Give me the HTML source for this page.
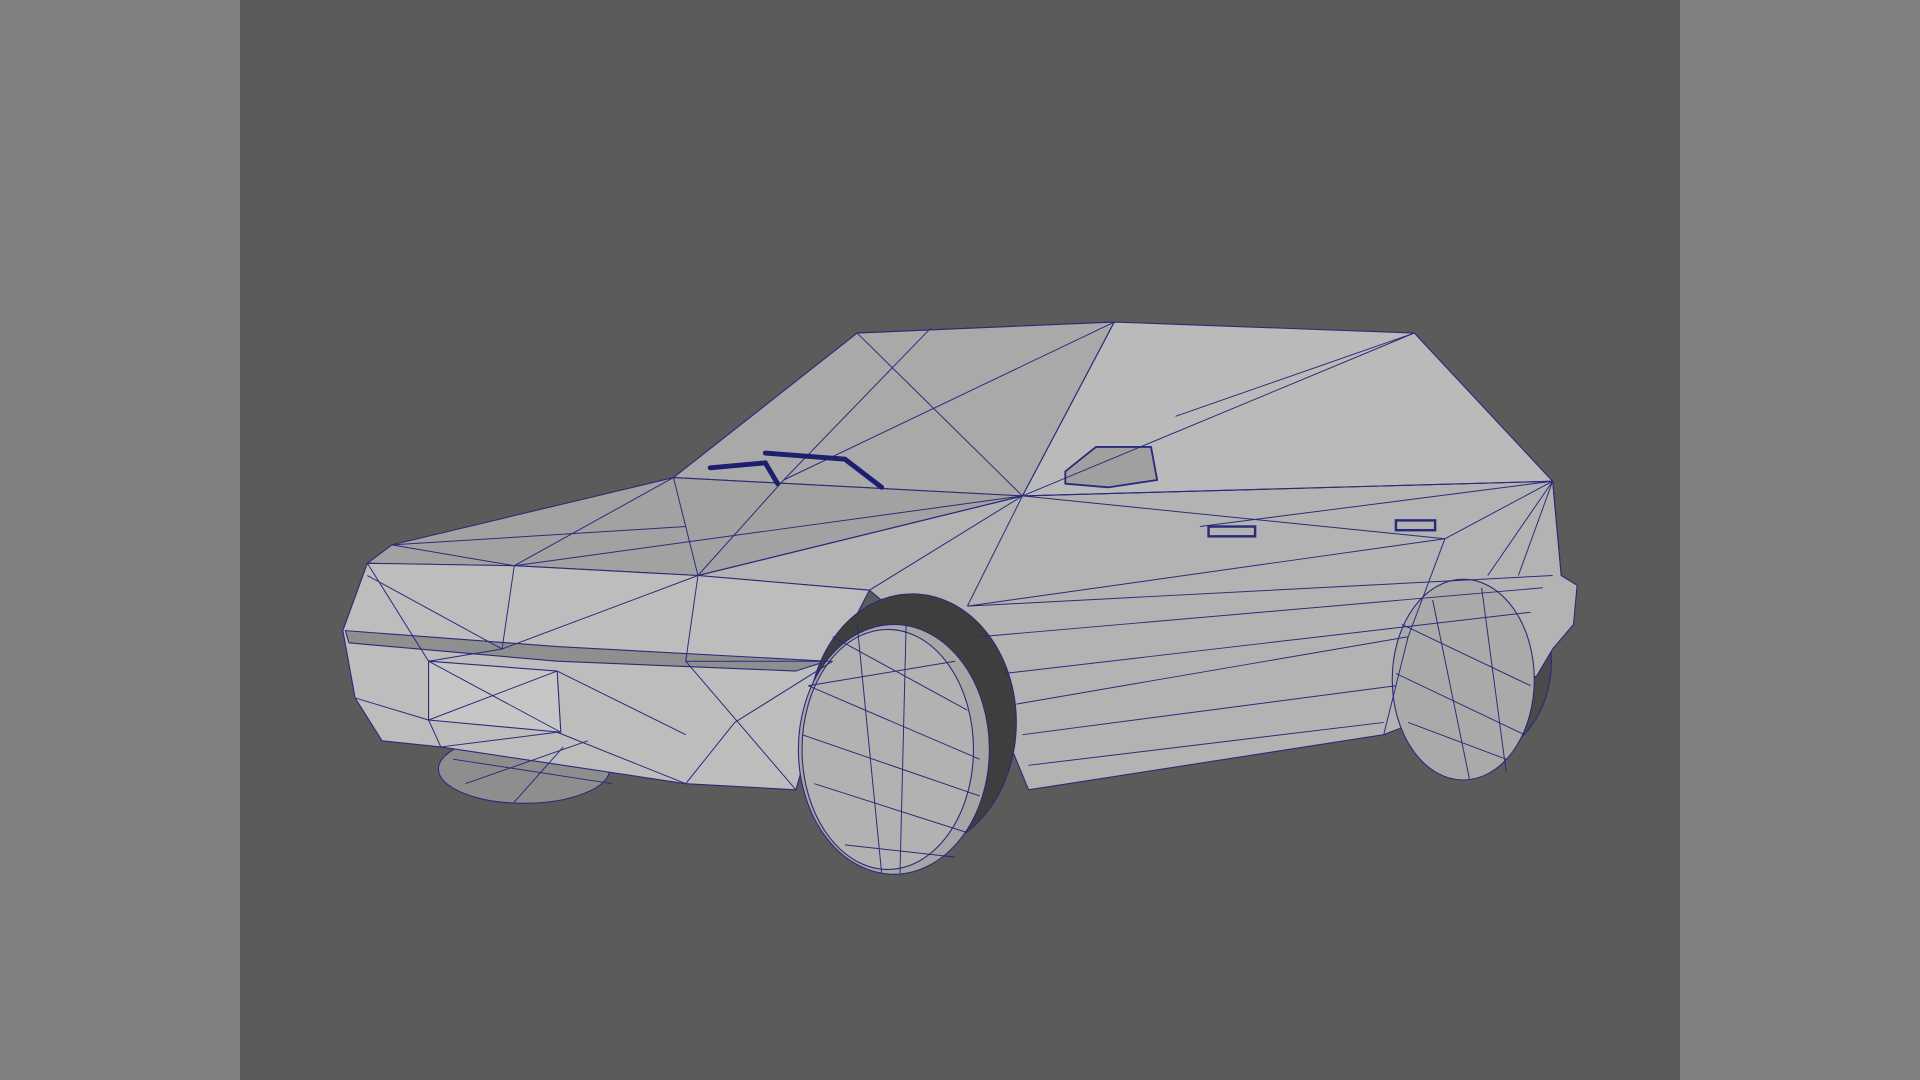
<!DOCTYPE html>
<html><head><meta charset="utf-8"><style>
html,body{margin:0;padding:0;width:1920px;height:1080px;overflow:hidden;background:#808080}
svg{display:block}
</style></head><body>
<svg width="1920" height="1080" viewBox="0 0 1568 882" preserveAspectRatio="none" xmlns="http://www.w3.org/2000/svg">
<rect x="0" y="0" width="1568" height="882" fill="#808080"/>
<rect x="196" y="0" width="1176" height="882" fill="#5b5b5b"/>
<g stroke="#2a2a7a" stroke-width="0.9" stroke-linejoin="round">
<!-- hidden front-left wheel -->
<ellipse cx="428" cy="628" rx="70" ry="28" fill="#8e8e8e"/>
<!-- rear wheel arch shadow -->
<ellipse cx="1205" cy="540" rx="62" ry="78" fill="#4a4a4a"/>
<!-- side -->
<polygon points="835,405 1268,393 1275,470 1288,478 1285,510 1268,530 1255,552 1130,600 840,645 805,560 710,482 570,470" fill="#b3b3b3"/>
<!-- roof -->
<polygon points="700,272 910,263 1155,272 1268,393 835,405" fill="#bababa"/>
<!-- windshield -->
<polygon points="550,390 700,272 910,263 835,405" fill="#a9a9a9"/>
<!-- hood -->
<polygon points="300,460 320,445 550,390 835,405 570,470 420,462" fill="#a2a2a2"/>
<!-- front face -->
<polygon points="300,460 420,462 570,470 710,482 680,540 650,645 560,640 360,610 312,605 290,570 280,515" fill="#bdbdbd"/>
<polygon points="282,515 455,528 675,540 650,548 455,540 285,525" fill="#8f8f8f"/>
<polygon points="350,540 455,548 458,598 350,588" fill="#c6c6c6"/>
<!-- front wheel arch shadow -->
<ellipse cx="745" cy="590" rx="85" ry="105" fill="#3e3e3e"/>
<!-- front wheel -->
<ellipse cx="730" cy="612" rx="78" ry="102" fill="#a6a6a6"/>
<ellipse cx="725" cy="612" rx="70" ry="98" fill="#b2b2b2"/>
<!-- rear wheel -->
<ellipse cx="1195" cy="555" rx="58" ry="82" fill="#aaaaaa"/>
<!-- mirror -->
<polygon points="870,385 895,365 940,365 945,392 905,398 870,395" fill="#a0a0a0" stroke-width="1.5"/>
</g>
<!-- mesh lines -->
<g stroke="#2a2a7a" stroke-width="0.8" fill="none">
<path d="M700,272 L835,405 M760,268 L640,392 M910,263 L835,405 M910,263 L640,392 M835,405 L1155,272 M835,405 L1268,393 M1155,272 L960,340 M1268,393 L1215,470 M1268,393 L1240,470"/>
<path d="M320,445 L420,462 M550,390 L420,462 M835,405 L420,462 M550,390 L570,470 M835,405 L570,470 M835,405 L710,482 M640,392 L570,470 M320,445 L560,430"/>
<path d="M300,460 L350,540 M420,462 L410,530 M410,530 L350,540 M410,530 L570,470 M570,470 L560,540 M560,540 L680,540 M560,540 L650,645 M360,610 L455,598 M455,598 L560,640 M560,640 L600,590 M600,590 L680,540 M290,570 L350,588 M350,588 L360,610 M455,548 L560,600 M300,470 L410,530"/>
<path d="M350,540 L458,598 M350,588 L455,548"/>
<path d="M835,405 L790,495 M790,495 L1268,470 M790,495 L1180,440 M800,520 L1260,480 M820,550 L1250,500 M830,575 L1150,520 M835,600 L1140,560 M840,625 L1130,590 M1268,393 L1180,440 M1180,440 L1150,520 M1268,393 L1275,470 M1150,520 L1130,600 M835,405 L1180,440 M980,430 L1268,393"/>
<path d="M660,560 L800,620 M655,600 L800,650 M665,640 L790,680 M680,520 L790,580 M690,690 L780,700 M700,510 L720,713 M740,510 L735,713 M660,560 L780,540"/>
<path d="M1145,510 L1250,560 M1140,550 L1245,600 M1150,590 L1230,620 M1170,490 L1200,636 M1210,480 L1230,630"/>
<path d="M370,620 L500,640 M380,640 L480,605 M420,655 L460,610"/>
</g>
<!-- wipers -->
<g stroke="#1e1e6e" stroke-width="4" stroke-linecap="round" fill="none">
<path d="M580,382 L625,378 L635,395"/>
<path d="M625,370 L690,375 L720,398"/>
</g>
<g fill="none" stroke="#2a2a7a" stroke-width="2">
<rect x="987" y="430" width="38" height="8"/>
<rect x="1140" y="425" width="32" height="8"/>
</g>
</svg>
</body></html>
